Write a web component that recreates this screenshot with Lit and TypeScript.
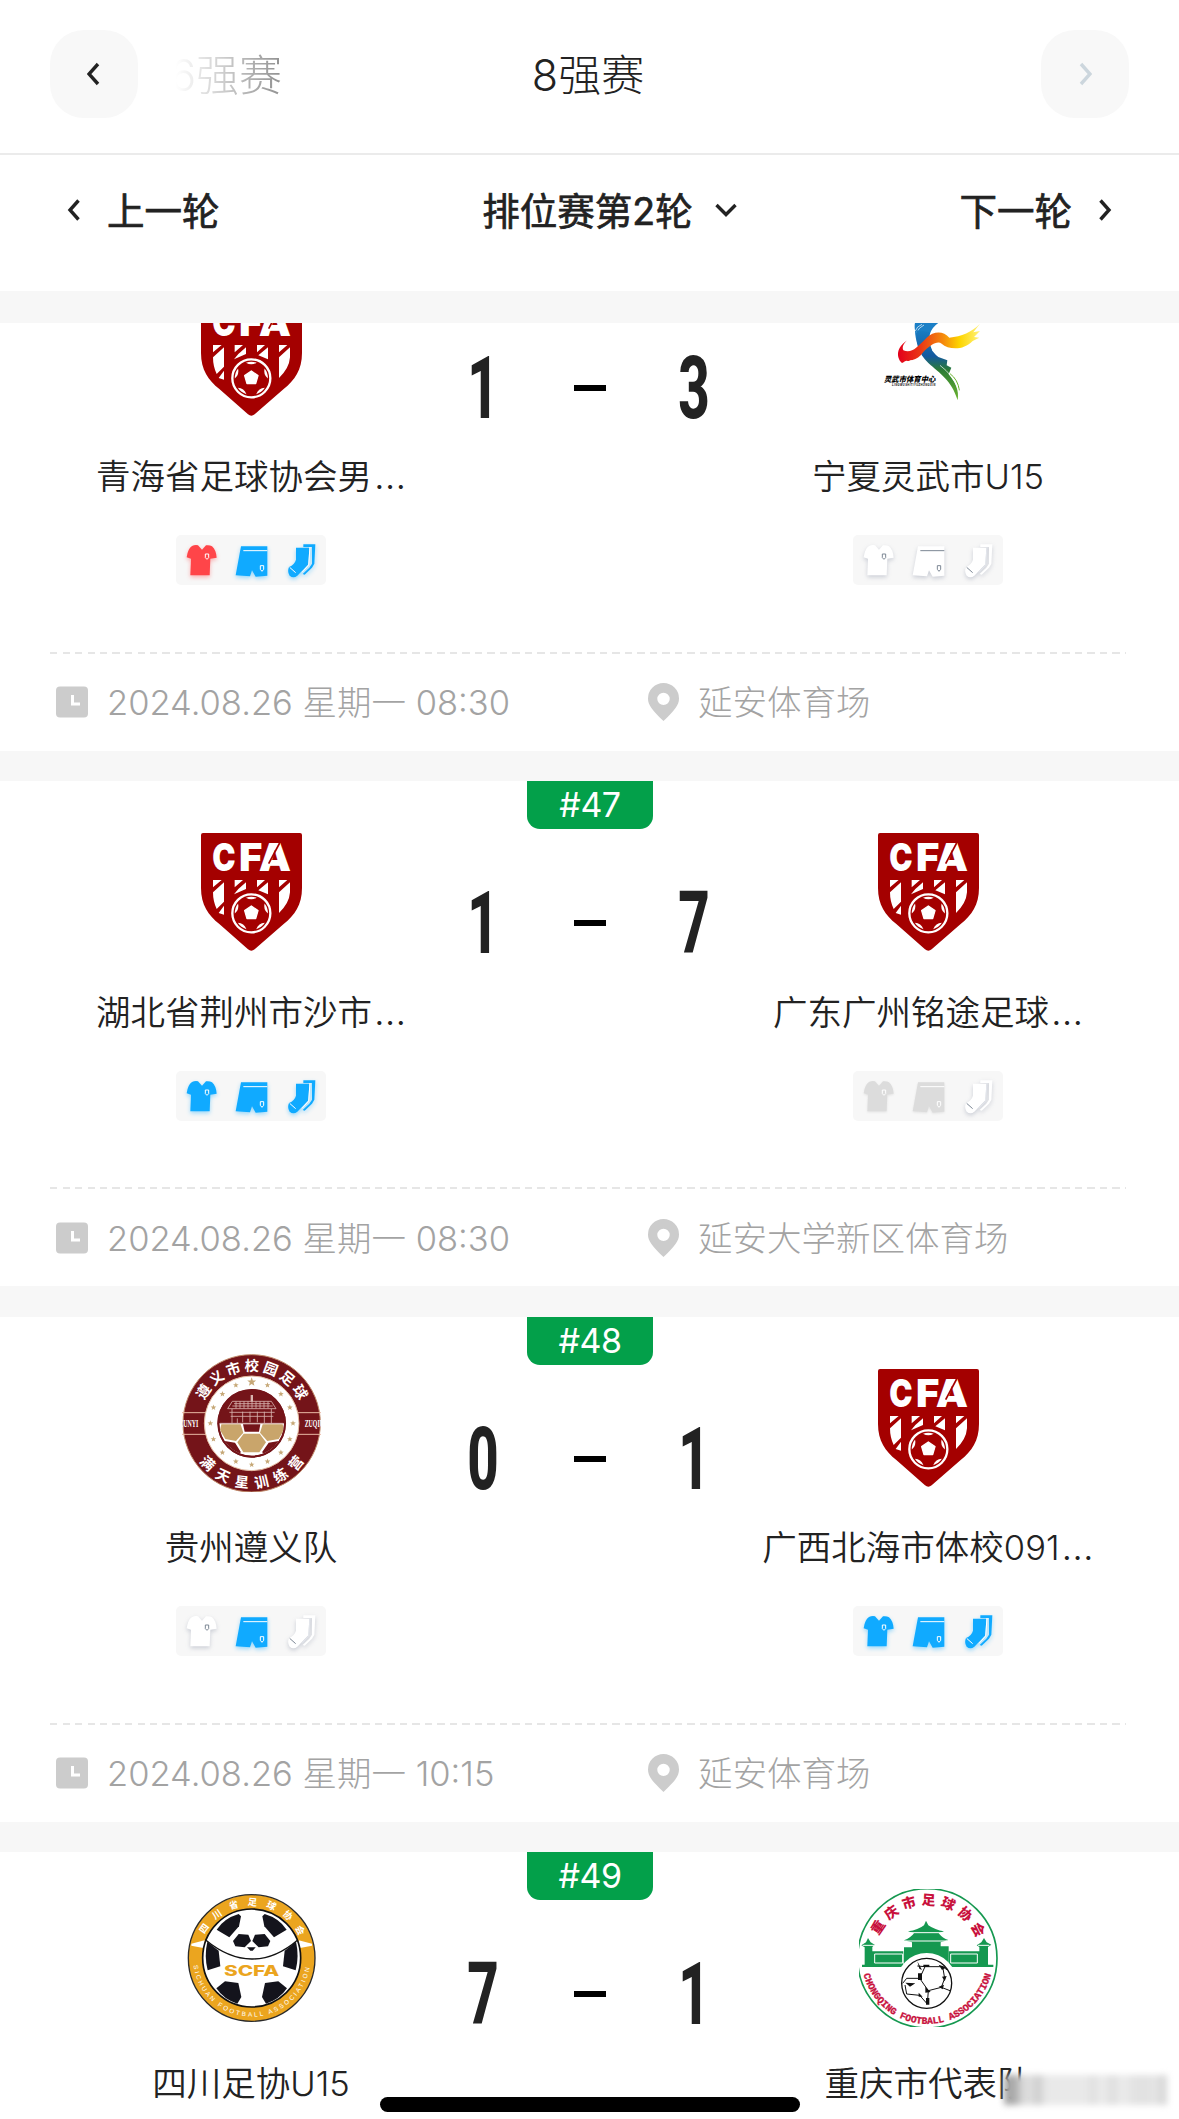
import { LitElement, html, svg, css, nothing } from 'lit';
import { customElement, property } from 'lit/decorators.js';

type KitColor = 'red' | 'blue' | 'white' | 'grey';
type CrestName = 'cfa' | 'lingwu' | 'zunyi' | 'sichuan' | 'chongqing';

interface Team {
  name: string;
  crest: CrestName;
  kit: [KitColor, KitColor, KitColor];
}

interface Match {
  no: number;
  home: Team;
  away: Team;
  score: [number, number];
  time: string;
  venue: string;
}

const MATCHES: Match[] = [
  {
    no: 46,
    home: { name: '青海省足球协会男…', crest: 'cfa', kit: ['red', 'blue', 'blue'] },
    away: { name: '宁夏灵武市U15', crest: 'lingwu', kit: ['white', 'white', 'white'] },
    score: [1, 3],
    time: '2024.08.26 星期一 08:30',
    venue: '延安体育场',
  },
  {
    no: 47,
    home: { name: '湖北省荆州市沙市…', crest: 'cfa', kit: ['blue', 'blue', 'blue'] },
    away: { name: '广东广州铭途足球…', crest: 'cfa', kit: ['grey', 'grey', 'white'] },
    score: [1, 7],
    time: '2024.08.26 星期一 08:30',
    venue: '延安大学新区体育场',
  },
  {
    no: 48,
    home: { name: '贵州遵义队', crest: 'zunyi', kit: ['white', 'blue', 'white'] },
    away: { name: '广西北海市体校091…', crest: 'cfa', kit: ['blue', 'blue', 'blue'] },
    score: [0, 1],
    time: '2024.08.26 星期一 10:15',
    venue: '延安体育场',
  },
  {
    no: 49,
    home: { name: '四川足协U15', crest: 'sichuan', kit: ['white', 'white', 'white'] },
    away: { name: '重庆市代表队', crest: 'chongqing', kit: ['blue', 'blue', 'blue'] },
    score: [7, 1],
    time: '2024.08.26 星期一 10:15',
    venue: '延安大学新区体育场',
  },
];

// upper or lower half circle, both running left to right
const arc = (cx: number, cy: number, r: number, upper: boolean) =>
  `M${cx - r} ${cy}A${r} ${r} 0 0 ${upper ? 1 : 0} ${cx + r} ${cy}`;

const star = (cx: number, cy: number, r: number) =>
  Array.from({ length: 10 }, (_, i) => {
    const a = (i * Math.PI) / 5 - Math.PI / 2;
    const k = i % 2 ? r * 0.42 : r;
    return `${(cx + Math.cos(a) * k).toFixed(1)},${(cy + Math.sin(a) * k).toFixed(1)}`;
  }).join(' ');

@customElement('team-crest')
export class TeamCrest extends LitElement {
  static styles = css`
    :host {
      display: block;
      width: 139px;
      height: 138px;
    }
    svg {
      display: block;
      width: 100%;
      height: 100%;
    }
    text {
      font-family: 'Noto Sans CJK SC', sans-serif;
    }
    .cfa {
      font: 900 115px Inter, sans-serif;
      fill: #fff;
    }
    .lingwu {
      font-size: 23px;
      font-weight: 900;
      font-style: italic;
    }
    .lingwu-sub {
      font: italic 700 8px 'Liberation Sans', sans-serif;
    }
    .zunyi {
      font-size: 43px;
      font-weight: 700;
      fill: #fff;
    }
    .zunyi-side {
      font: 700 28px 'Liberation Serif', serif;
      fill: #fff;
    }
    .sichuan {
      font-size: 28px;
      font-weight: 700;
      letter-spacing: 26px;
      fill: #fff;
    }
    .sichuan-en {
      font: 400 19px 'Liberation Sans', sans-serif;
      letter-spacing: 6.6px;
      fill: #fff;
    }
    .scfa {
      font: 800 43px Inter, sans-serif;
      fill: #eba51f;
    }
    .chongqing {
      font-size: 41px;
      font-weight: 900;
      letter-spacing: 14px;
      fill: #c8103c;
    }
    .chongqing-en {
      font: 700 29px 'Liberation Mono', monospace;
      letter-spacing: 0;
      fill: #c8103c;
      stroke: #c8103c;
      stroke-width: 1;
    }
  `;

  @property({ type: String }) name: CrestName = 'cfa';

  private _cfa() {
    return svg`
      <g transform="translate(57 45)">
        <path fill="#a40000" d="M6 0H297q6 0 6 6V165c0 50-22 82-55 108L161 349q-10 8-20 0L55 273C22 247 0 215 0 165V6q0-6 6-6z" />
        <text class="cfa" x="34" y="113" textLength="70" lengthAdjust="spacingAndGlyphs">C</text>
        <text class="cfa" x="114" y="113" textLength="70" lengthAdjust="spacingAndGlyphs">F</text>
        <text class="cfa" x="173" y="113" textLength="97" lengthAdjust="spacingAndGlyphs">A</text>
        <path stroke="#a40000" stroke-width="5" d="M203 92L236 30" />
        <path fill="#fff" d="M36 141H62L36 163zM36 178L69 148V206L47 228Q36 205 36 178zM53 240L69 218V245z
          M101 141H126L101 163zM135 148V168L99 184 112 168zM168 141H192L168 163zM201 148V184L172 172z
          M234 141H259L234 163zM267 148V178Q265 210 234 240V178z" />
        <circle cx="151" cy="241" r="66" fill="#a40000" />
        <circle cx="151" cy="241" r="57" fill="none" stroke="#fff" stroke-width="7" />
        <path fill="#fff" d="M151 219l20 14 -7 24h-26l-7-24z" stroke="#fff" stroke-width="4" stroke-linejoin="round" />
        <g fill="#fff">
          <path d="M135 194q16-6 32 0q-16 10-32 0z" />
          <path d="M135 194q16-6 32 0q-16 10-32 0z" transform="rotate(72 151 241)" />
          <path d="M135 194q16-6 32 0q-16 10-32 0z" transform="rotate(144 151 241)" />
          <path d="M135 194q16-6 32 0q-16 10-32 0z" transform="rotate(216 151 241)" />
          <path d="M135 194q16-6 32 0q-16 10-32 0z" transform="rotate(288 151 241)" />
        </g>
      </g>
    `;
  }

  private _lingwu() {
    return svg`
      <defs>
        <linearGradient id="ribbon" x1="895" y1="0" x2="1140" y2="0" gradientUnits="userSpaceOnUse">
          <stop offset="0" stop-color="#e3001b" />
          <stop offset=".28" stop-color="#ea3a14" />
          <stop offset=".55" stop-color="#f58a0c" />
          <stop offset=".75" stop-color="#fdd500" />
          <stop offset="1" stop-color="#fff27a" />
        </linearGradient>
        <linearGradient id="body" x1="0" y1="30" x2="0" y2="270" gradientUnits="userSpaceOnUse">
          <stop offset="0" stop-color="#1b8ad0" />
          <stop offset=".45" stop-color="#14599f" />
          <stop offset=".62" stop-color="#2b7b35" />
          <stop offset="1" stop-color="#6cb52d" />
        </linearGradient>
      </defs>
      <g transform="translate(-777 82)">
        <path fill="#1b7fc6" d="M945 60Q938 20 975 10L1040 25Q1000 40 990 70L955 105Q945 85 945 60z" />
        <path fill="none" stroke="#fff" stroke-width="2" d="M946 62Q950 48 966 42M950 66Q956 52 972 44" />
        <path fill="url(#body)" d="M950 60C945 95 955 130 985 158C1020 190 1055 210 1073 270C1078 240 1066 215 1046 192L1054 172 1040 165 1042 150 1015 140C995 125 985 105 990 65z" />
        <path fill="none" stroke="#6cb52d" stroke-width="3" d="M1050 190Q1074 208 1078 240" />
        <path fill="none" stroke="#fff" stroke-width="2" d="M1020 165Q1060 195 1075 238M996 120L1018 134" />
        <path fill="url(#ribbon)" d="M922 90C880 118 895 150 906 158C925 148 950 155 970 125C990 105 1012 90 1025 100C1045 118 1090 122 1118 92L1138 82 1122 80 1140 62 1120 66 1140 40C1115 65 1085 78 1048 82C1030 60 1000 62 980 82C950 112 935 130 910 120C905 110 912 98 922 90z" />
        <path fill="#fff" d="M908 160q8-13 18-6 8-8 16 0l-14 6z" />
        <text class="lingwu" x="852" y="214" textLength="154" lengthAdjust="spacingAndGlyphs">灵武市体育中心</text>
        <text class="lingwu-sub" x="876" y="228" textLength="130">LINGWUSHITIYUZHONGXIN</text>
      </g>
    `;
  }

  private _zunyi() {
    const stars = Array.from({ length: 16 }, (_, i) => {
      const a = (i * Math.PI) / 8 - Math.PI / 2;
      return star(275 + Math.cos(a) * 124, 265 + Math.sin(a) * 124, i === 0 ? 14 : 9);
    });
    return svg`
      <defs>
        <path id="zt" d=${arc(275, 265, 157, true)} />
        <path id="zb" d=${arc(275, 265, 194, false)} />
        <clipPath id="ball"><circle cx="275" cy="265" r="97" /></clipPath>
      </defs>
      <g transform="translate(-66 -57)">
        <circle cx="275" cy="265" r="206" fill="#741419" stroke="#c08a6a" stroke-width="3" />
        <path fill="none" stroke="#e9b9a4" stroke-width="3" d="M66 233H140M66 298H140M410 233H484M410 298H484" />
        <circle cx="275" cy="265" r="142" fill="#fff" stroke="#e2b89e" stroke-width="3" />
        ${stars.map((points) => svg`<polygon points=${points} fill="#c6a877" />`)}
        <circle cx="275" cy="265" r="103" fill="#741419" />
        <g clip-path="url(#ball)">
          <rect x="172" y="265" width="206" height="110" fill="#fff" />
          <g fill="#c9a56b">
            <path d="M184 268H242L250 293 228 318 196 312 180 285z" />
            <path d="M308 268H368L372 285 356 312 322 318 300 293z" />
            <path d="M251 296H299L318 322 298 352 250 352 232 322z" />
          </g>
          <path fill="#741419" d="M249 268H301L297 290H254zM190 317L225 323 243 352 225 362zM360 317L326 323 306 352 325 362z" />
        </g>
        <circle cx="275" cy="265" r="100" fill="none" stroke="#741419" stroke-width="5" />
        <g fill="none" stroke="#d9b3ae" stroke-width="2.500">
          <path d="M217 199H334L348 221H203zM222 206H330M217 213H338M228 199V220M240 199V220M252 199V220M264 199V220M276 199V220M288 199V220M300 199V220M312 199V220M324 199V220" />
          <path d="M208 232H344M212 244H340M216 222V264M232 250V264M248 230V262M270 230V262M292 230V262M313 230V264M334 222V264M180 265H370" />
        </g>
        <rect x="272" y="180" width="7" height="20" fill="#d9b3ae" />
        <text class="zunyi" letter-spacing="9"><textPath href="#zt" startOffset="51%" text-anchor="middle">遵义市校园足球</textPath></text>
        <text class="zunyi" letter-spacing="22"><textPath href="#zb" startOffset="52%" text-anchor="middle">满天星训练营</textPath></text>
        <text class="zunyi-side" x="58" y="276" textLength="57" lengthAdjust="spacingAndGlyphs">ZUNYI</text>
        <text class="zunyi-side" x="434" y="276" textLength="58" lengthAdjust="spacingAndGlyphs">ZUQIU</text>
      </g>
    `;
  }

  private _sichuan() {
    const half = svg`
      <path d="M140 150Q162 116 206 103L213 110 207 140 178 173z" />
      <path d="M189 184L206 163 235 165 243 184 224 203 196 200z" />
      <path d="M112 186L146 213 151 260 113 272Q102 230 112 186z" />
      <path d="M139 326L165 305 205 310 214 352 202 372Q162 360 139 326z" />
    `;
    return svg`
      <defs>
        <path id="st" d=${arc(245, 235, 157, true)} />
        <path id="sb" d=${arc(245, 235, 176, false)} />
      </defs>
      <g transform="translate(-36 -28)">
        <circle cx="245" cy="235" r="190" fill="#eba51f" stroke="#2a2a2a" stroke-width="4" />
        <path fill="#fff" d="M64 192L104 182 104 206 64 198zM426 192L386 182 386 206 426 198z" />
        <circle cx="245" cy="235" r="147" fill="#fff" stroke="#111" stroke-width="5" />
        <g fill="#14141c">${half}</g>
        <g fill="#14141c" transform="translate(490 0) scale(-1 1)">${half}</g>
        <path fill="#14141c" d="M231 203H257L248 213H241z" />
        <path fill="none" stroke="#111" stroke-width="4" d="M106 180Q175 237 245 238T384 180" />
        <text class="scfa" x="162" y="290" textLength="166" lengthAdjust="spacingAndGlyphs">SCFA</text>
        <text class="sichuan"><textPath href="#st" startOffset="53%" text-anchor="middle">四川省足球协会</textPath></text>
        <text class="sichuan-en"><textPath href="#sb" startOffset="50%" text-anchor="middle">SICHUAN FOOTBALL ASSOCIATION</textPath></text>
      </g>
    `;
  }

  private _chongqing() {
    return svg`
      <defs>
        <path id="ct" d=${arc(262, 265, 160, true)} />
        <path id="cb" d=${arc(262, 265, 197, false)} />
      </defs>
      <g transform="translate(-57 -57)">
        <circle cx="262" cy="265" r="209" fill="#fff" stroke="#159850" stroke-width="5" />
        <g fill="#159850">
          <path d="M258 152L265 166Q285 180 312 184L296 190Q308 205 325 210L302 217V229H326V290H192V232H216V217L192 211Q212 204 222 190L204 184Q235 180 252 166z" />
          <path d="M84 204L92 217 104 224 97 231V244H190V285H66V290H66L74 284V232L64 226 78 217zM432 204L440 217 454 224 444 231V284L458 290H326V244H418V231L410 226 424 217z" />
          <path d="M66 284H460V291H66z" />
        </g>
        <path fill="none" stroke="#fff" stroke-width="3" d="M104 252H188V279H104zM332 252H412V279H332zM196 213H322M208 188H308M68 226H102M414 226H448" />
        <circle cx="260" cy="340" r="91" fill="#fff" />
        <circle cx="260" cy="340" r="75" fill="#fff" stroke="#111" stroke-width="4" />
        <g fill="none" stroke="#111" stroke-width="3">
          <path d="M255 290H308L314 325 304 352 265 362 239 325zM239 325H200L188 340M232 288L255 290M308 290L322 300M304 352L330 362M265 362L262 402M200 372L239 376 262 402M195 345L200 372" />
        </g>
        <g fill="#111">
          <path d="M232 274L246 300 238 296zM234 310H246V330H234zM250 284H268V291H250zM296 284L318 292 306 300zM306 320L320 318 314 334zM296 350L312 344 308 358zM256 350L272 366 256 368zM196 338L226 340 210 350zM236 368L248 380 236 380zM258 384H268V404H258z" />
        </g>
        <text class="chongqing"><textPath href="#ct" startOffset="52%" text-anchor="middle">重庆市足球协会</textPath></text>
        <text class="chongqing-en"><textPath href="#cb" startOffset="50%" text-anchor="middle">CHONGQING FOOTBALL ASSOCIATION</textPath></text>
      </g>
    `;
  }

  private _art() {
    switch (this.name) {
      case 'lingwu':
        return this._lingwu();
      case 'zunyi':
        return this._zunyi();
      case 'sichuan':
        return this._sichuan();
      case 'chongqing':
        return this._chongqing();
      default:
        return this._cfa();
    }
  }

  protected render() {
    return html`<svg viewBox="0 0 417 414">${this._art()}</svg>`;
  }
}

@customElement('team-kit')
export class TeamKit extends LitElement {
  static styles = css`
    :host {
      display: grid;
      grid-template-columns: repeat(3, 50px);
      width: 150px;
      height: 50px;
      border-radius: 5px;
      background: #f7f7f7;
    }
    svg {
      display: block;
      width: 50px;
      height: 50px;
      overflow: visible;
    }
    .red {
      fill: #ff4549;
      --line: #fff;
      filter: drop-shadow(0 2px 2px rgba(255, 69, 73, 0.4));
    }
    .blue {
      fill: #10aaff;
      --line: #fff;
      filter: drop-shadow(0 2px 2px rgba(16, 170, 255, 0.4));
    }
    .white {
      fill: #fff;
      --line: #7c8794;
      filter: drop-shadow(0 2px 2px rgba(90, 100, 130, 0.28));
    }
    .grey {
      fill: #dcdcdc;
      --line: #fff;
      filter: drop-shadow(0 1px 1px rgba(0, 0, 0, 0.08));
    }
    .line {
      fill: none;
      stroke: var(--line);
      stroke-width: 3;
    }
    .white .seam {
      stroke: #e3e6ec;
    }
  `;

  @property({ attribute: false }) colors: KitColor[] = [];

  protected render() {
    const [shirt, shorts, socks] = this.colors;
    return html`
      <svg class=${shirt} viewBox="0 0 150 150">
        <g transform="translate(32 30)">
          <path d="M16 3Q25-1 34 1L46 14 58 1Q68-1 76 4Q88 14 90 38L71 41 69 91H11L13 41 0 37Q3 12 16 3z" />
          <path class="line" d="M56 27H66V38L61 43 56 38z" />
        </g>
      </svg>
      <svg class=${shorts} viewBox="0 0 150 150">
        <g transform="translate(29 34)">
          <path d="M16 0H95V88L60 91 49 72 43 90 0 87z" />
          <path class="line" d="M23 13H95" />
          <path class="line" d="M74 58H84V69L79 75 74 69z" />
        </g>
      </svg>
      <svg class=${socks} viewBox="0 0 150 150">
        <g transform="translate(36 28)">
          <path d="M46 0H82L79 58 72 70 50 91 44 89 64 70 72 58V8H46z" />
          <path d="M24 10H64L61 60 28 94Q16 104 5 94Q-3 82 3 68Q20 60 24 46z" />
          <path class="line seam" d="M66 8L62 62 42 84" />
          <path class="line" d="M5 69L23 85" />
        </g>
      </svg>
    `;
  }
}

@customElement('match-card')
export class MatchCard extends LitElement {
  static styles = css`
    :host {
      box-sizing: border-box;
      position: relative;
      display: block;
      flex: none;
      height: 505px;
      padding: 37px 50px 0;
      background: #fff;
    }
    .badge {
      position: absolute;
      top: 0;
      left: 527px;
      width: 126px;
      height: 48px;
      border-radius: 0 0 13px 13px;
      background: #03a04a;
      color: #fff;
      font: 400 34px/47px Inter, sans-serif;
      letter-spacing: -0.5px;
      text-align: center;
    }
    .teams {
      display: grid;
      grid-template-columns: 402px 276px 400px;
      height: 370px;
    }
    .team {
      display: flex;
      flex-direction: column;
      align-items: center;
    }
    .name {
      display: flex;
      align-items: baseline;
      height: 50px;
      margin-top: 31.5px;
      color: #222;
      font-size: 34.5px;
      font-weight: 350;
      line-height: 50px;
      white-space: nowrap;
    }
    .more {
      margin-left: 2px;
      font-size: 38px;
      line-height: 1;
    }
    team-kit {
      margin-top: 33px;
    }
    .score {
      display: flex;
      align-items: center;
      justify-content: space-between;
      height: 64px;
      margin: 73px 7px 0 4px;
    }
    .num {
      width: 54px;
      color: #222;
      font: 800 88px/64px Roboto, sans-serif;
      text-align: center;
      transform: scaleX(0.62);
    }
    .dash {
      width: 32px;
      height: 6px;
      margin-left: 3px;
      background: #000;
    }
    .rule {
      height: 2px;
      margin: -1px 3px 0 0;
      background: repeating-linear-gradient(90deg, #e6e6e6 0 7px, transparent 7px 12.5px);
    }
    .info {
      display: grid;
      grid-template-columns: 592px 1fr;
      height: 97px;
    }
    .cell {
      display: flex;
      align-items: center;
      gap: 19px;
      padding-left: 6px;
      color: #a3a3a3;
      font-size: 34.5px;
      font-weight: 300;
      white-space: nowrap;
    }
    .cell span {
      margin-top: -4px;
    }
    .cell svg {
      flex: none;
      fill: #ccc;
    }
  `;

  @property({ attribute: false }) match!: Match;

  private _team(team: Team) {
    const cut = team.name.endsWith('…');
    return html`
      <div class="team">
        <team-crest name=${team.crest}></team-crest>
        <div class="name">
          ${cut ? team.name.slice(0, -1) : team.name}${cut ? html`<span class="more">…</span>` : nothing}
        </div>
        <team-kit .colors=${team.kit}></team-kit>
      </div>
    `;
  }

  protected render() {
    const m = this.match;
    if (!m) return nothing;
    return html`
      <div class="badge">#${m.no}</div>
      <div class="teams">
        ${this._team(m.home)}
        <div class="score">
          <span class="num">${m.score[0]}</span>
          <span class="dash"></span>
          <span class="num">${m.score[1]}</span>
        </div>
        ${this._team(m.away)}
      </div>
      <div class="rule"></div>
      <div class="info">
        <div class="cell">
          <svg width="32" height="32" viewBox="0 0 32 32">
            <rect y="0.5" width="32" height="31" rx="4" />
            <path d="M16.5 9V18H24" fill="none" stroke="#fff" stroke-width="3" />
          </svg>
          <span>${m.time}</span>
        </div>
        <div class="cell">
          <svg width="31" height="38" viewBox="0 0 31 38">
            <path fill-rule="evenodd" d="M15.5 0A15.5 15.5 0 0 1 31 15.5C31 22 27 27 15.5 38C4 27 0 22 0 15.5A15.5 15.5 0 0 1 15.5 0zM15.5 9.7a6.2 6.2 0 1 0 0 12.4a6.2 6.2 0 1 0 0-12.4z" />
          </svg>
          <span>${m.venue}</span>
        </div>
      </div>
    `;
  }
}

@customElement('app-root')
export class AppRoot extends LitElement {
  static styles = css`
    :host {
      position: relative;
      display: flex;
      flex-direction: column;
      width: 1179px;
      height: 2119px;
      overflow: hidden;
      background: #f7f7f7;
      color: #222;
      font-family: Inter, 'Noto Sans CJK SC', sans-serif;
    }
    .stages {
      box-sizing: border-box;
      display: grid;
      grid-template-columns: 88px 1fr 210px 1fr 88px;
      align-items: center;
      height: 155px;
      padding: 0 50px 5px;
      border-bottom: 2px solid #ebebeb;
      background: #fff;
      font-size: 43px;
      font-weight: 300;
      text-align: center;
    }
    .stages > .prev,
    .stages > .stage {
      margin-top: -5px;
    }
    .stages > .stage {
      margin-left: -3px;
    }
    .btn {
      display: flex;
      align-items: center;
      justify-content: center;
      height: 88px;
      border-radius: 34px;
      background: #f8f8f8;
    }
    .prev {
      width: 106px;
      margin-left: 38px;
      overflow: hidden;
      direction: rtl;
      white-space: nowrap;
      -webkit-mask-image: linear-gradient(90deg, transparent, rgba(0, 0, 0, 0.5));
      mask-image: linear-gradient(90deg, transparent, rgba(0, 0, 0, 0.5));
    }
    .rounds {
      box-sizing: border-box;
      display: grid;
      grid-template-columns: 155px 1fr 155px;
      align-items: center;
      height: 136px;
      padding: 0 66px 26px;
      background: #fff;
      font-size: 37.5px;
      -webkit-text-stroke: 0.7px #222;
    }
    .rounds > div {
      display: flex;
      align-items: center;
      gap: 26px;
    }
    .rounds > .current {
      gap: 22px;
      justify-content: center;
      padding-left: 40px;
    }
    .rounds > .next {
      justify-content: flex-end;
    }
    .rounds span {
      margin-top: -4px;
      white-space: nowrap;
    }
    svg {
      flex: none;
      fill: none;
      stroke: #222;
      stroke-width: 3.4;
    }
    .off svg {
      stroke: #ccd6dd;
    }
    .scroll {
      flex: 1;
      min-height: 0;
      margin-top: 32px;
      overflow: hidden;
    }
    .list {
      display: flex;
      flex-direction: column;
      gap: 30.5px;
      margin-top: -77.5px;
    }
    .home-bar {
      position: absolute;
      left: 380px;
      bottom: 7px;
      width: 420px;
      height: 15px;
      border-radius: 8px;
      background: #000;
    }
    .smudge {
      position: absolute;
      left: 1004px;
      top: 2075px;
      width: 164px;
      height: 30px;
      background: linear-gradient(
        90deg,
        #a8a8a8 0 6%,
        #dcdcdc 12% 18%,
        #cacaca 20%,
        #e9e9e9 26% 50%,
        #e0e0e0 54%,
        #ececec 60%,
        #dedede 66%,
        #ececec 72%,
        #e2e2e2 80% 88%,
        #e6e6e6 92%,
        #d6d6d6 97%,
        #e9e9e9
      );
      filter: blur(3px);
    }
  `;

  protected render() {
    return html`
      <div class="stages">
        <div class="btn">
          <svg width="14" height="24" viewBox="0 0 14 24"><path d="M11 2L2 12l9 10" /></svg>
        </div>
        <div class="prev">16强赛</div>
        <div class="stage">8强赛</div>
        <div></div>
        <div class="btn off">
          <svg width="14" height="24" viewBox="0 0 14 24"><path d="M3 2l9 10L3 22" /></svg>
        </div>
      </div>
      <div class="rounds">
        <div>
          <svg width="15" height="22" viewBox="0 0 15 22"><path d="M12.500 1.500L4 11l8.500 9.500" /></svg>
          <span>上一轮</span>
        </div>
        <div class="current">
          <span>排位赛第2轮</span>
          <svg width="22" height="14" viewBox="0 0 22 14"><path d="M1.500 2L11 11.500 20.500 2" /></svg>
        </div>
        <div class="next">
          <span>下一轮</span>
          <svg width="15" height="22" viewBox="0 0 15 22"><path d="M2.500 1.500L11 11l-8.500 9.500" /></svg>
        </div>
      </div>
      <div class="scroll">
        <div class="list">
          ${MATCHES.map((m) => html`<match-card .match=${m}></match-card>`)}
        </div>
      </div>
      <div class="home-bar"></div>
      <div class="smudge"></div>
    `;
  }
}

declare global {
  interface HTMLElementTagNameMap {
    'app-root': AppRoot;
    'match-card': MatchCard;
    'team-crest': TeamCrest;
    'team-kit': TeamKit;
  }
}
